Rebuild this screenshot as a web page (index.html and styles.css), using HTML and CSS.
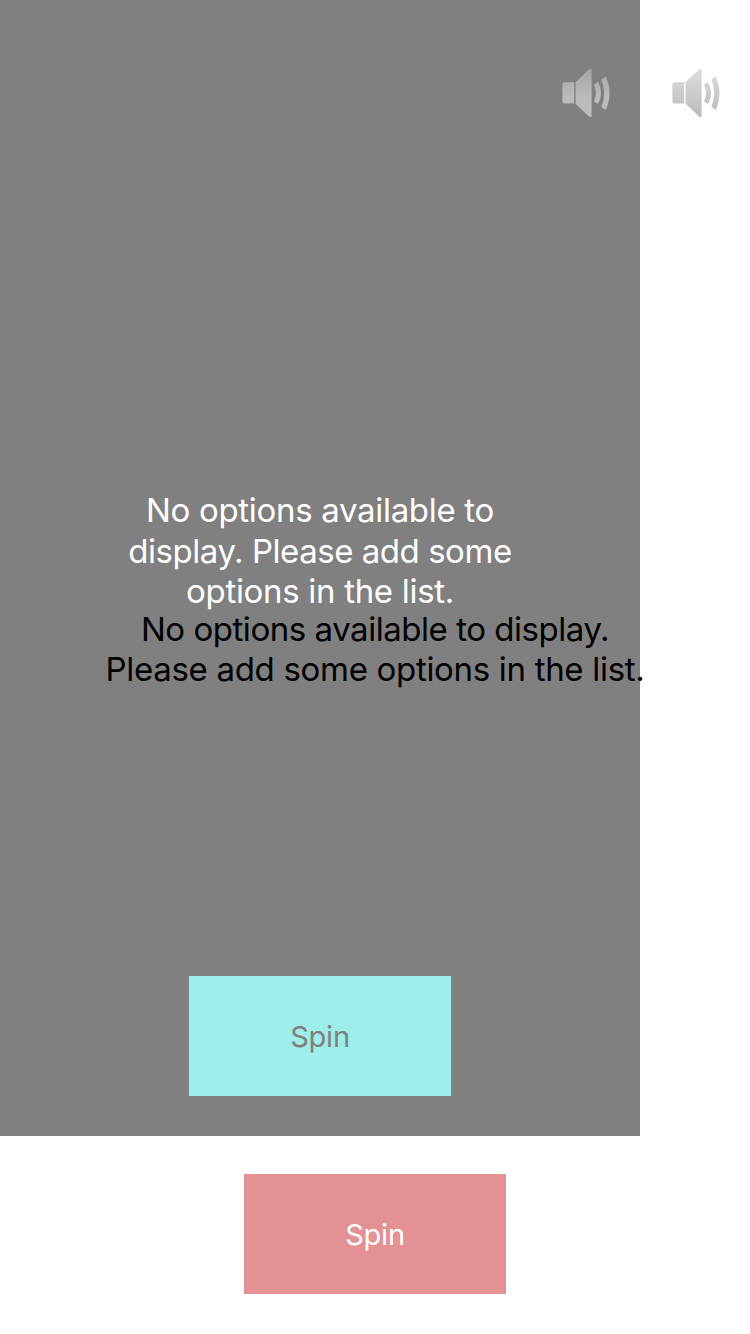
FILE: index.html
```html
<!DOCTYPE html>
<html lang="en">
<head>
<meta charset="utf-8">
<title>Spin</title>
<link rel="stylesheet" href="styles.css">
</head>
<body>
<svg class="defs" width="0" height="0">
  <defs>
    <linearGradient id="metal" gradientUnits="userSpaceOnUse" x1="22" y1="0" x2="22" y2="50">
      <stop offset="0" stop-color="#dedede"/><stop offset="1" stop-color="#bababa"/>
    </linearGradient>
    <linearGradient id="metal-dim" gradientUnits="userSpaceOnUse" x1="22" y1="0" x2="22" y2="50">
      <stop offset="0" stop-color="#a4a4a4"/><stop offset=".6" stop-color="#bcbcbc"/><stop offset="1" stop-color="#bababa"/>
    </linearGradient>
    <g id="speaker">
      <path d="M3.900 14.300H13.200V35.500H3.900Q1.400 35.500 1.400 33V16.800Q1.400 14.300 3.900 14.300Z"/>
      <path d="M14.600 14.200L27.900 1.400Q30.600 -.4 30.600 2.300V47.700Q30.600 50.400 27.900 48.600L14.600 35.700Z"/>
      <path d="M32.900 16.700L37 13.700Q43.100 25 37 36L32.900 33.300Q37 25 32.900 16.700Z"/>
      <path d="M40.300 11.500L44.800 8.400Q52.200 25 44.800 42L40.300 39Q46 25 40.300 11.500Z"/>
    </g>
  </defs>
</svg>
<main class="screen">
  <svg class="sound" viewBox="0 0 50 50"><use href="#speaker" fill="url(#metal)"/></svg>
  <p class="message"><span class="loose tight">No options available to display.</span><span class="loose">Please add some options in the list.</span></p>
  <button class="spin">Spin</button>
</main>
<section class="overlay">
  <svg class="sound" viewBox="0 0 50 50"><use href="#speaker" fill="url(#metal-dim)"/></svg>
  <p class="message"><span class="loose">No options available to</span><span class="loose tight">display. Please add some</span><span class="loose">options in the list.</span></p>
  <button class="spin">Spin</button>
</section>
</body>
</html>
```

FILE: styles.css
```css
* { box-sizing: border-box; }
body { margin: 0; background: #fff; font-family: Inter, sans-serif; }
.defs { position: absolute; }
.screen, .overlay { display: flex; flex-direction: column; align-items: center; }
.screen { position: relative; z-index: 1; width: 750px; height: 1334px; padding: 68px 0 40px; pointer-events: none; }
.overlay { position: absolute; top: 0; left: 0; width: 640px; height: 1136px; padding: 68px 0 40px; background: #808080; }
.sound { width: 50px; height: 50px; align-self: flex-end; margin-right: 29px; }
.message { margin: 0; display: flex; flex-direction: column; align-items: center; font-size: 33px; line-height: 40.500px; white-space: nowrap; }
.loose { letter-spacing: -0.310px; }
.tight { letter-spacing: -0.460px; }
.screen .message { margin-top: 491px; line-height: 40px; color: #000; }
.overlay .message { margin-top: 372px; color: #fff; }
.spin { margin: auto 0 0; padding: 1px 0 0; border: 0; border-radius: 0; width: 262px; height: 120px; font: 29px Inter, sans-serif; letter-spacing: -0.200px; }
.screen .spin { background: #e39195; color: #fff; }
.overlay .spin { background: #9deeea; color: #808080; }
```
